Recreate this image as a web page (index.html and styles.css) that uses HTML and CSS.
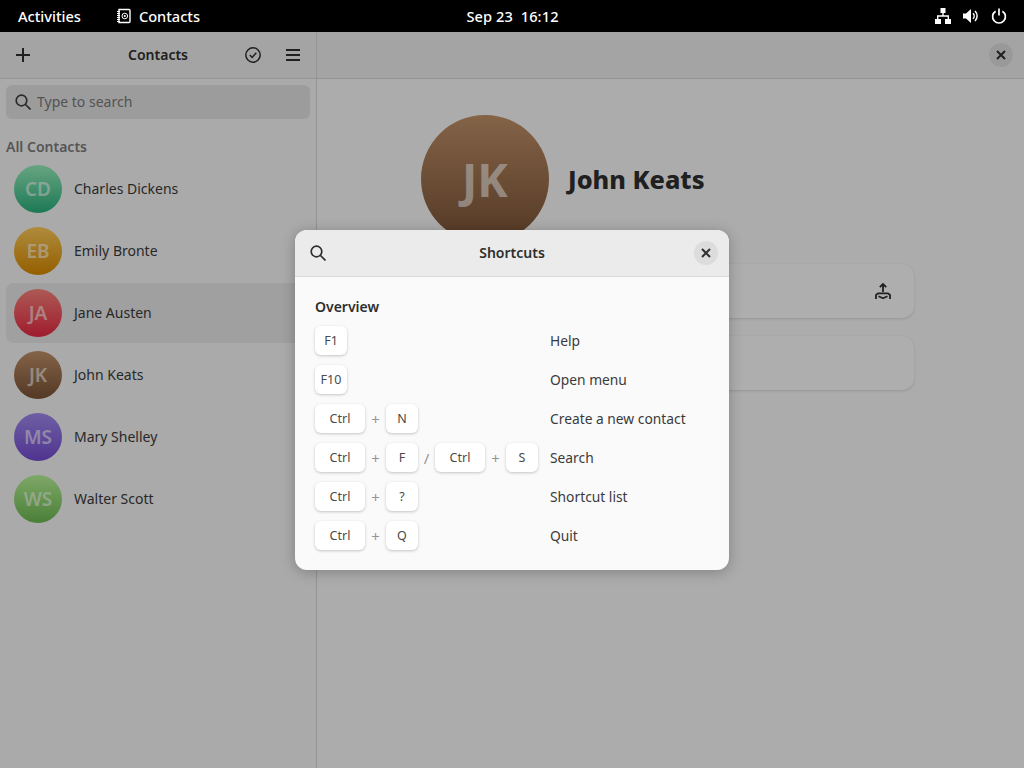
FILE: index.html
```html
<!DOCTYPE html>
<html lang="en">
<head>
    <meta charset="UTF-8">
    <meta name="viewport" content="width=device-width, initial-scale=1.0">
    <title>Contacts</title>
    <link rel="stylesheet" href="styles.css">
</head>

<body>
    <div class="topbar">
        <div class="topbar-left">
            <span class="activities">Activities</span>
            <span class="app-menu">
                <svg width="16" height="16" viewBox="0 0 16 16">
                    <path d="M3 1.5h10a1 1 0 0 1 1 1v11a1 1 0 0 1-1 1H3z" fill="none" stroke="#fff" stroke-width="1.4"/>
                    <path d="M1 3.5h3M1 5.5h3M1 7.5h3M1 9.5h3M1 11.5h3M1 13.5h3" stroke="#fff" stroke-width="1"/>
                    <circle cx="8.8" cy="8" r="2.8" fill="none" stroke="#fff" stroke-width="1"/>
                    <circle cx="8.8" cy="8" r="1.1" fill="#fff"/>
                </svg>
                Contacts
            </span>
        </div>
        <div class="clock">Sep 23&nbsp;&nbsp;16:12</div>
        <div class="tray">
            <svg width="16" height="16" viewBox="0 0 16 16" fill="#fff">
                <path d="M5.5 0h5v5h-5zM0 11h6v5H0zM10 11h6v5h-6z"/>
                <path d="M7.3 5h1.4v2.3H14V11h-1.4V8.7H3.4V11H2V7.3h5.3z"/>
            </svg>
            <svg width="16" height="16" viewBox="0 0 16 16" fill="none">
                <path d="M0 5.5h3L8 1v14l-5-4.5H0z" fill="#fff"/>
                <path d="M10 5.2a4 4 0 0 1 0 5.6M12 3a7 7 0 0 1 0 10" stroke="#fff" stroke-width="1.5"/>
            </svg>
            <svg width="16" height="16" viewBox="0 0 16 16" fill="none" stroke="#fff" stroke-width="1.7">
                <path d="M8 .5v7"/>
                <path d="M4.6 3.2a6.4 6.4 0 1 0 6.8 0"/>
            </svg>
        </div>
    </div>

    <div class="window">
        <div class="sidebar">
            <div class="headerbar">
                <svg class="icon" width="16" height="16" viewBox="0 0 16 16"><path d="M8 1v14M1 8h14" stroke="#2e2e2e" stroke-width="2"/></svg>
                <span class="headerbar-title">Contacts</span>
                <svg class="icon icon-check" width="16" height="16" viewBox="0 0 16 16" fill="none" stroke="#2e2e2e" stroke-width="1.5">
                    <circle cx="8" cy="8" r="7.2"/>
                    <path d="M4.8 8l2.3 2.4 4.2-4.6"/>
                </svg>
                <svg class="icon" width="16" height="16" viewBox="0 0 16 16"><path d="M1 3h14M1 8h14M1 13h14" stroke="#2e2e2e" stroke-width="2"/></svg>
            </div>
            <div class="search">
                <svg width="16" height="16" viewBox="0 0 16 16" fill="none" stroke="#3d3d3d" stroke-width="1.7">
                    <circle cx="6.5" cy="6.5" r="5.3"/>
                    <path d="M10.5 10.5l5 5"/>
                </svg>
                <span>Type to search</span>
            </div>
            <div class="list-title">All Contacts</div>
            <div class="contact-list">
                <div class="contact"><span class="avatar green">CD</span><span class="contact-name">Charles Dickens</span></div>
                <div class="contact"><span class="avatar orange">EB</span><span class="contact-name">Emily Bronte</span></div>
                <div class="contact selected"><span class="avatar red">JA</span><span class="contact-name">Jane Austen</span></div>
                <div class="contact"><span class="avatar brown">JK</span><span class="contact-name">John Keats</span></div>
                <div class="contact"><span class="avatar purple">MS</span><span class="contact-name">Mary Shelley</span></div>
                <div class="contact"><span class="avatar lime">WS</span><span class="contact-name">Walter Scott</span></div>
            </div>
        </div>

        <div class="main">
            <div class="main-header">
                <button class="close-btn" type="button">
                    <svg width="10" height="10" viewBox="0 0 10 10"><path d="M1 1l8 8M9 1l-8 8" stroke="#2e2e2e" stroke-width="2"/></svg>
                </button>
            </div>
            <div class="details">
                <div class="profile">
                    <span class="avatar avatar-big brown">JK</span>
                    <h1>John Keats</h1>
                </div>
                <div class="card card-share">
                    <svg width="16" height="16" viewBox="0 0 16 16" fill="none" stroke="#2e2e2e" stroke-width="1.8">
                        <path d="M8 9V1M4.8 4.2L8 1l3.2 3.2"/>
                        <path d="M1 16v-4l2-1.6h10l2 1.6v4"/>
                        <path d="M3.5 13.2L8 15.2l4.5-2"/>
                    </svg>
                </div>
                <div class="card"></div>
            </div>
        </div>
    </div>

    <div class="backdrop"></div>

    <div class="dialog">
        <div class="dialog-header">
            <svg width="16" height="16" viewBox="0 0 16 16" fill="none" stroke="#2e2e2e" stroke-width="1.7">
                <circle cx="6.5" cy="6.5" r="5.3"/>
                <path d="M10.5 10.5l5 5"/>
            </svg>
            <span class="dialog-title">Shortcuts</span>
            <button class="close-btn dialog-close" type="button">
                <svg width="10" height="10" viewBox="0 0 10 10"><path d="M1 1l8 8M9 1l-8 8" stroke="#2e2e2e" stroke-width="2"/></svg>
            </button>
        </div>
        <div class="dialog-body">
            <div class="section-title">Overview</div>
            <div class="shortcuts">
                <div class="keys"><kbd>F1</kbd></div>
                <div class="action">Help</div>
                <div class="keys"><kbd>F10</kbd></div>
                <div class="action">Open menu</div>
                <div class="keys"><kbd class="wide">Ctrl</kbd><i>+</i><kbd>N</kbd></div>
                <div class="action">Create a new contact</div>
                <div class="keys"><kbd class="wide">Ctrl</kbd><i>+</i><kbd>F</kbd><i class="slash">/</i><kbd class="wide">Ctrl</kbd><i>+</i><kbd>S</kbd></div>
                <div class="action">Search</div>
                <div class="keys"><kbd class="wide">Ctrl</kbd><i>+</i><kbd>?</kbd></div>
                <div class="action">Shortcut list</div>
                <div class="keys"><kbd class="wide">Ctrl</kbd><i>+</i><kbd>Q</kbd></div>
                <div class="action">Quit</div>
            </div>
        </div>
    </div>
</body>
</html>
```

FILE: styles.css
```css
* {
    box-sizing: border-box;
}

html, body {
    height: 100%;
}

body {
    margin: 0;
    font-family: "Noto Sans", sans-serif;
    font-size: 14px;
    color: #3a3a3a;
    background-color: #f7f7f7;
    display: flex;
    flex-direction: column;
    overflow: hidden;
}

.topbar {
    height: 32px;
    flex: none;
    background-color: #000;
    color: #fff;
    font-weight: 500;
    font-size: 14.6px;
    display: grid;
    grid-template-columns: 1fr auto 1fr;
    align-items: center;
    padding: 0 17px 0 18px;
}

.topbar-left {
    display: flex;
    align-items: center;
    gap: 35px;
}

.app-menu {
    display: flex;
    align-items: center;
    gap: 7px;
}

.clock {
    letter-spacing: 0.1px;
}

.tray {
    display: flex;
    justify-content: flex-end;
    gap: 12px;
}

.window {
    flex: 1;
    display: flex;
    min-height: 0;
}

.sidebar {
    width: 317px;
    flex: none;
    background-color: #f4f4f4;
    border-right: 1px solid #d4d4d4;
}

.headerbar {
    height: 47px;
    display: flex;
    align-items: center;
    padding: 0 15px;
    background-color: #ebebeb;
    border-bottom: 1px solid #d4d4d4;
}

.headerbar-title {
    flex: 1;
    text-align: center;
    font-weight: 600;
    padding: 0 0 1px 40px;
    color: #2e2e2e;
}

.icon-check {
    margin-right: 24px;
}

.search {
    margin: 6px 6px 0;
    height: 34px;
    border-radius: 6px;
    background-color: #e0e0e0;
    display: flex;
    align-items: center;
    gap: 6px;
    padding: 0 0 1px 9px;
    color: #777;
}

.list-title {
    margin: 18px 6px 0;
    height: 22px;
    font-weight: 600;
    color: #7c7c7c;
}

.contact-list {
    margin: 0 6px;
    display: flex;
    flex-direction: column;
    gap: 2px;
}

.contact {
    height: 60px;
    display: flex;
    align-items: center;
    gap: 12px;
    padding-left: 8px;
    border-radius: 8px;
}

.contact-name {
    margin-bottom: 2px;
}

.selected {
    background-color: #e5e5e5;
}

.avatar {
    width: 48px;
    height: 48px;
    flex: none;
    border-radius: 50%;
    display: flex;
    align-items: center;
    justify-content: center;
    font-size: 19px;
    font-weight: 600;
    color: rgba(255, 255, 255, 0.6);
}

.avatar-big {
    width: 128px;
    height: 128px;
    font-size: 46px;
    font-weight: 700;
}

.green { background: linear-gradient(#96ecba, #28ae79); }
.orange { background: linear-gradient(#fbc858, #d58800); }
.red { background: linear-gradient(#f7817a, #e52842); }
.brown { background: linear-gradient(#be8f67, #785135); }
.purple { background: linear-gradient(#9e89ec, #724ace); }
.lime { background: linear-gradient(#b7f095, #6ab750); }

.main {
    flex: 1;
}

.main-header {
    height: 47px;
    display: flex;
    align-items: center;
    justify-content: flex-end;
    padding-right: 11px;
    background-color: #ebebeb;
    border-bottom: 1px solid #d4d4d4;
}

.close-btn {
    width: 24px;
    height: 24px;
    padding: 0;
    border: none;
    border-radius: 50%;
    background-color: #dcdcdc;
    display: flex;
    align-items: center;
    justify-content: center;
}

.details {
    padding: 36px 110px 0 104px;
}

.profile {
    display: flex;
    align-items: center;
    gap: 19px;
    margin-bottom: 21px;
}

h1 {
    margin: 0;
    font-size: 25.3px;
    font-weight: 800;
    color: #2e2e2e;
}

.card {
    height: 54px;
    margin-bottom: 18px;
    border-radius: 12px;
    background-color: #fafafa;
    box-shadow: 0 1px 3px rgba(0, 0, 0, 0.14);
}

.card-share {
    display: flex;
    align-items: center;
    justify-content: flex-end;
    padding-right: 23px;
}

.backdrop {
    position: absolute;
    top: 32px;
    left: 0;
    right: 0;
    bottom: 0;
    background-color: rgba(0, 0, 0, 0.3);
}

.dialog {
    position: absolute;
    left: 295px;
    top: 230px;
    width: 434px;
    height: 340px;
    border-radius: 12px;
    overflow: hidden;
    background-color: #fafafa;
    box-shadow: 0 2px 14px rgba(0, 0, 0, 0.25);
}

.dialog-header {
    height: 47px;
    display: flex;
    align-items: center;
    padding: 0 11px 0 15px;
    background-color: #ebebeb;
    border-bottom: 1px solid #d8d8d8;
}

.dialog-title {
    flex: 1;
    text-align: center;
    font-weight: 600;
    padding: 0 0 2px 4px;
    color: #2e2e2e;
}

.dialog-body {
    padding: 20px 20px 0;
}

.section-title {
    height: 19px;
    line-height: 19px;
    font-weight: 600;
    margin-bottom: 10px;
    color: #2e2e2e;
}

.shortcuts {
    display: grid;
    grid-template-columns: 235px 1fr;
    grid-auto-rows: 29px;
    row-gap: 10px;
    align-items: center;
}

.action {
    padding-bottom: 1px;
    font-size: 13.8px;
}

.keys {
    display: flex;
    align-items: center;
}

kbd {
    width: 32px;
    height: 29px;
    background-color: #fff;
    border-radius: 6px;
    box-shadow: 0 1px 3px rgba(0, 0, 0, 0.22);
    display: flex;
    align-items: center;
    justify-content: center;
    font-family: inherit;
    font-size: 12.5px;
    color: #4a4a4a;
}

kbd.wide {
    width: 50px;
}

.keys i {
    width: 21px;
    text-align: center;
    font-style: normal;
    font-size: 15px;
    color: #959595;
}

.keys i.slash {
    width: 17px;
}
```
